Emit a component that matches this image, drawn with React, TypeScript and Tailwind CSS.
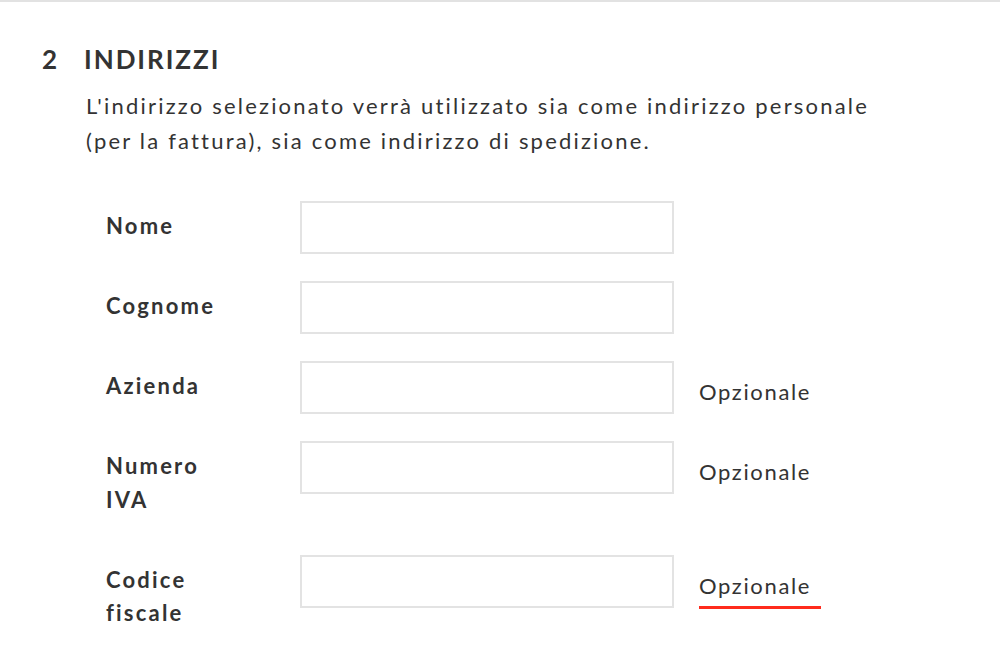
import React from "react";

type Field = {
  label: string;
  optional?: boolean;
  active?: boolean;
};

const fields: Field[] = [
  { label: "Nome" },
  { label: "Cognome" },
  { label: "Azienda", optional: true },
  { label: "Numero IVA", optional: true },
  { label: "Codice fiscale", optional: true, active: true },
];

function FieldRow({ field }: { field: Field }) {
  return (
    <div className="flex items-start mb-[26.5px]">
      <label className="w-[150px] shrink-0 pl-5 pt-[8px] pb-[12px] text-[22px] leading-[33.5px] font-bold tracking-[0.1em] text-[#333]">
        {field.label}
      </label>
      <input
        type="text"
        className="ml-[64px] w-[374px] h-[53px] border-2 border-[#e3e3e3] bg-white outline-none"
      />
      {field.optional && (
        <div className="ml-[25px] pt-[17px]">
          <span
            className={`block text-[22px] leading-[28px] tracking-[0.075em] text-[#333] ${
              field.active ? "w-[122px] pb-[6px] border-b-[3px] border-[#ff2b1c]" : ""
            }`}
          >
            Opzionale
          </span>
        </div>
      )}
    </div>
  );
}

export default function App() {
  return (
    <div
      className="w-[1000px] h-[659px] bg-white border-t-2 border-[#e2e2e2] overflow-hidden text-[#333]"
      style={{ fontFamily: "Lato, 'Open Sans', sans-serif" }}
    >
      <div className="pl-[42px] pt-[41px]">
        <h2 className="flex text-[26px] leading-[32px] font-bold tracking-[0.075em]">
          <span className="w-[42px]">2</span>
          <span>INDIRIZZI</span>
        </h2>
        <p className="ml-[44px] mt-[13px] text-[22px] leading-[35px] tracking-[0.1em]">
          L'indirizzo selezionato verrà utilizzato sia come indirizzo personale
          <br />
          (per la fattura), sia come indirizzo di spedizione.
        </p>
        <div className="ml-[44px] mt-[43px]">
          {fields.map((f) => (
            <FieldRow key={f.label} field={f} />
          ))}
        </div>
      </div>
    </div>
  );
}
